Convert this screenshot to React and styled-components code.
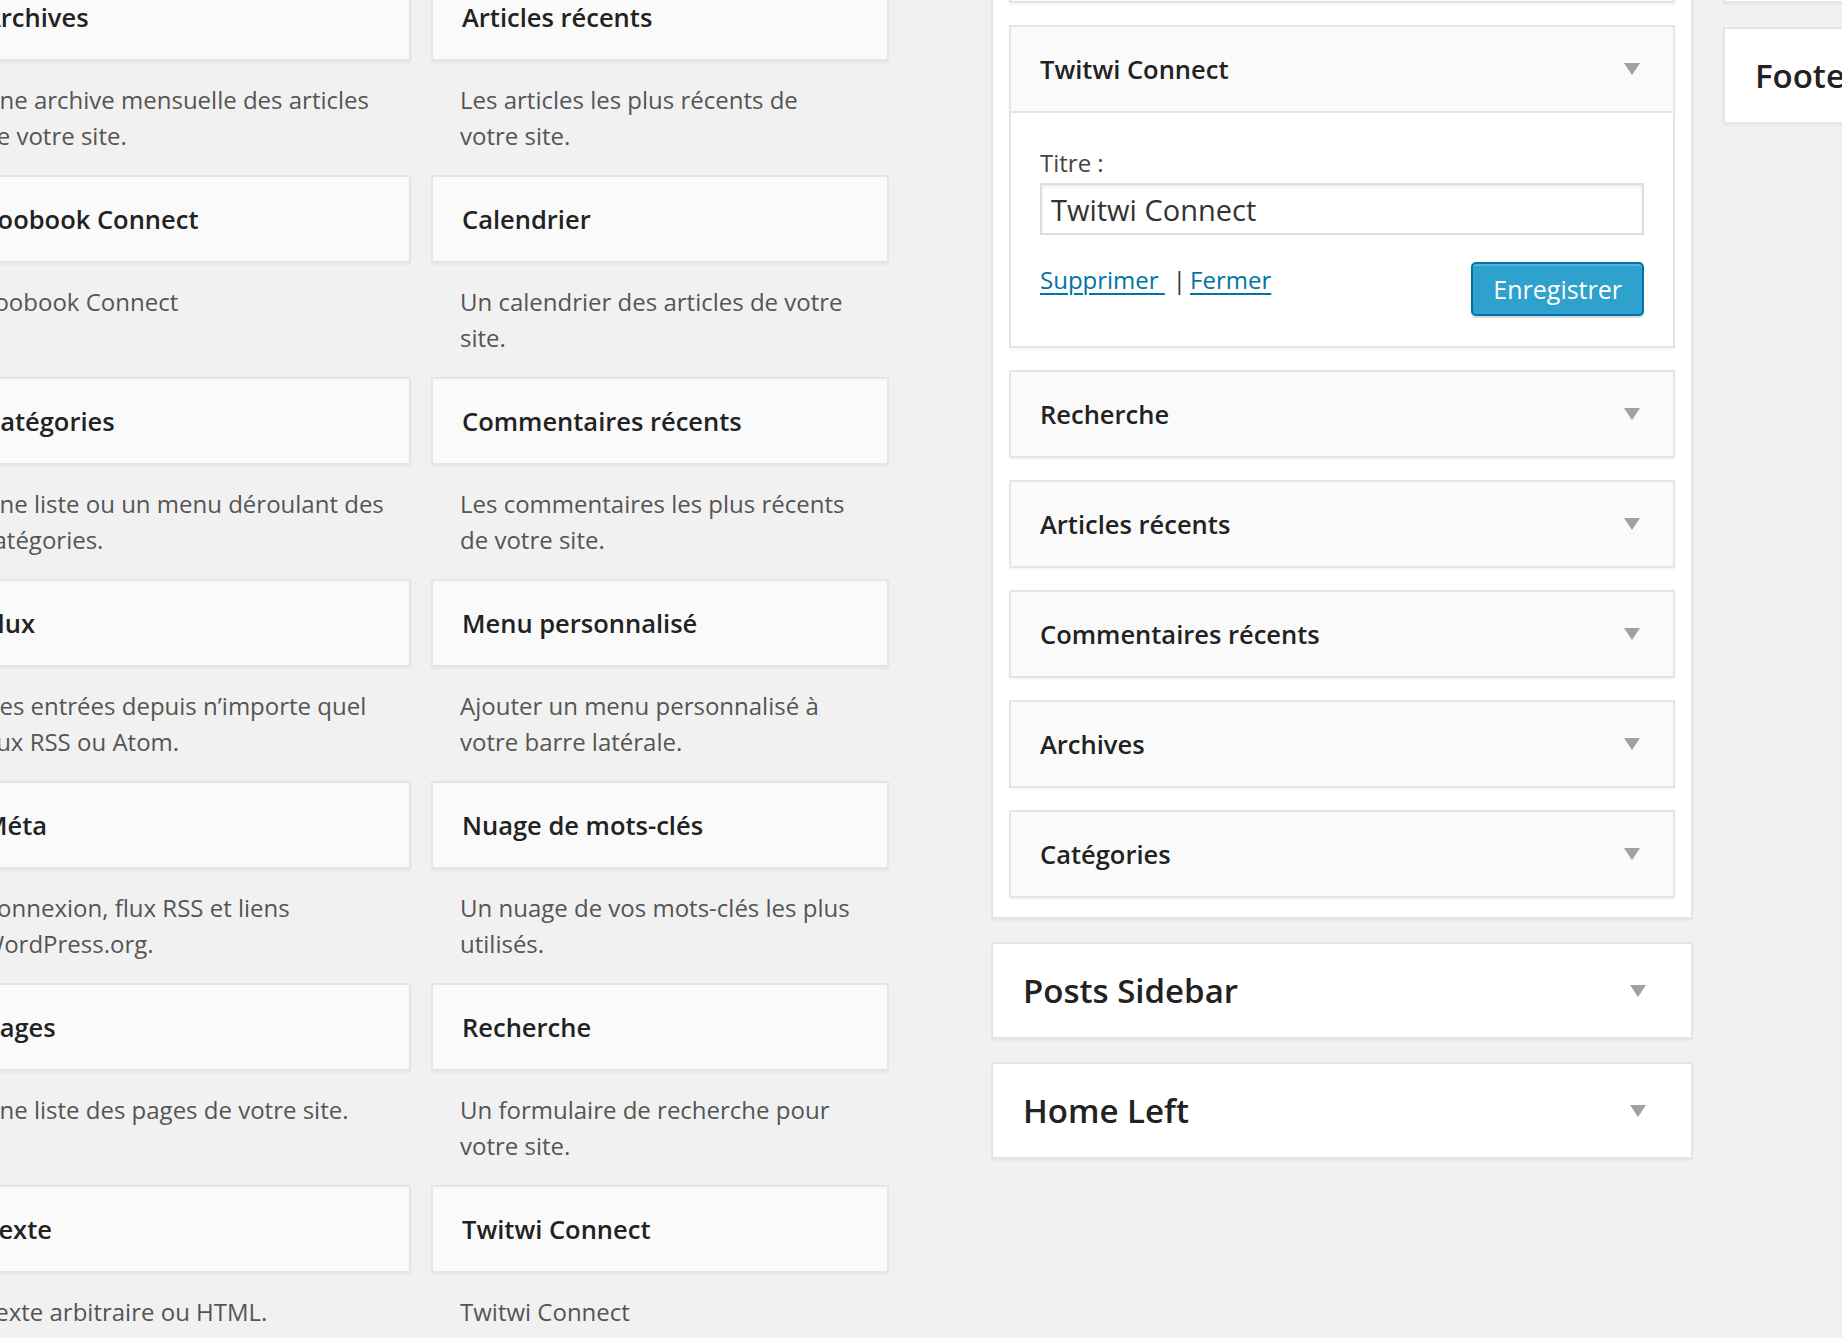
import React from "react";
import styled, { createGlobalStyle } from "styled-components";

const GlobalStyle = createGlobalStyle`
  html, body {
    margin: 0;
    padding: 0;
    background: #f1f1f1;
    overflow: hidden;
  }
  body {
    font-family: "Open Sans", "Liberation Sans", sans-serif;
    color: #444;
    -webkit-font-smoothing: antialiased;
  }
  * { box-sizing: border-box; }
`;

const Page = styled.div`
  display: flex;
  align-items: flex-start;
  margin: -107px 0 0 -47px;
  width: 2600px;
`;

const AvailableGrid = styled.div`
  flex: none;
  display: grid;
  grid-template-columns: 458px 458px;
  column-gap: 20px;
  padding-top: 80px;
`;

const WidgetItem = styled.div`
  display: flex;
  flex-direction: column;
`;

const WidgetBox = styled.div`
  height: 88px;
  display: flex;
  align-items: center;
  padding: 0 20px 0 29px;
  background: #fafafa;
  border: 2px solid #e5e5e5;
  box-shadow: 0 2px 2px rgba(0, 0, 0, 0.04);
  font-size: 25.5px;
  font-weight: 600;
  color: #222;
  white-space: nowrap;
  overflow: hidden;
`;

const Description = styled.p`
  margin: 0;
  box-sizing: content-box;
  width: 405px;
  min-height: 72px;
  padding: 21px 24px 21px 29px;
  font-size: 24px;
  line-height: 36px;
  color: #555;
  white-space: pre-line;
`;

const SidebarsColumn = styled.div`
  flex: none;
  width: 702px;
  margin-left: 102px;
  display: flex;
  flex-direction: column;
  gap: 23px;
`;

const Panel = styled.div`
  background: #fff;
  border: 2px solid #e5e5e5;
  box-shadow: 0 2px 2px rgba(0, 0, 0, 0.04);
  padding: 20px 16px 19px;
  display: flex;
  flex-direction: column;
  gap: 22px;
`;

const SidebarWidget = styled.div`
  background: #fafafa;
  border: 2px solid #e5e5e5;
  box-shadow: 0 2px 2px rgba(0, 0, 0, 0.04);
`;

const WidgetHead = styled.div`
  height: ${(p) => (p.$open ? 86 : 84)}px;
  display: flex;
  align-items: center;
  justify-content: space-between;
  padding: 0 33px 0 29px;
  border-bottom: ${(p) => (p.$open ? "2px solid #e5e5e5" : "none")};
  font-size: 25.5px;
  font-weight: 600;
  color: #222;
`;

const Arrow = styled.span`
  flex: none;
  width: 0;
  height: 0;
  border-left: 8px solid transparent;
  border-right: 8px solid transparent;
  border-top: 12px solid #a0a0a0;
`;

const WidgetInside = styled.div`
  background: #fff;
  padding: 32px 29px 30px;
`;

const Label = styled.label`
  display: block;
  font-size: 24px;
  line-height: 36px;
  color: #444;
  margin-bottom: 2px;
`;

const TextInput = styled.input`
  display: block;
  width: 100%;
  height: 52px;
  margin: 0;
  padding: 0 9px;
  border: 2px solid #ddd;
  box-shadow: inset 0 2px 3px rgba(0, 0, 0, 0.07);
  background: #fff;
  font-family: "Open Sans", "Liberation Sans", sans-serif;
  font-size: 29px;
  color: #333;
  outline: none;
`;

const Actions = styled.div`
  display: flex;
  justify-content: space-between;
  align-items: flex-start;
  margin-top: 27px;
`;

const Links = styled.div`
  font-size: 24px;
  line-height: 36px;
  color: #333;
`;

const Separator = styled.span`
  margin: 0 4px 0 8px;
`;

const Link = styled.a`
  color: #0074a2;
  text-decoration: underline;
  text-underline-offset: 4px;
  text-decoration-thickness: 2px;
`;

const SaveButton = styled.button`
  height: 54px;
  padding: 0 20px;
  border: 2px solid #0074a2;
  border-radius: 5px;
  background: #2ea2cc;
  color: #fff;
  font-family: "Open Sans", "Liberation Sans", sans-serif;
  font-size: 25px;
  line-height: 1;
  box-shadow: inset 0 2px 0 rgba(120, 200, 230, 0.5), 0 2px 0 rgba(0, 0, 0, 0.15);
  cursor: pointer;
`;

const SidebarBox = styled.div`
  height: 97px;
  display: flex;
  align-items: center;
  justify-content: space-between;
  padding: 0 45px 0 30px;
  background: #fff;
  border: 2px solid #e5e5e5;
  box-shadow: 0 2px 2px rgba(0, 0, 0, 0.04);
  font-size: 33px;
  font-weight: 600;
  color: #222;
  white-space: nowrap;
`;

const FarColumn = styled.div`
  flex: none;
  width: 702px;
  margin-left: 30px;
  margin-top: 13px;
  display: flex;
  flex-direction: column;
  gap: 24px;
`;

const available = [
  ["Archives", "Une archive mensuelle des articles de votre site."],
  ["Articles récents", "Les articles les plus récents de\nvotre site."],
  ["Foobook Connect", "Foobook Connect"],
  ["Calendrier", "Un calendrier des articles de votre site."],
  ["Catégories", "Une liste ou un menu déroulant des catégories."],
  ["Commentaires récents", "Les commentaires les plus récents de votre site."],
  ["Flux", "Des entrées depuis n’importe quel flux RSS ou Atom."],
  ["Menu personnalisé", "Ajouter un menu personnalisé à votre barre latérale."],
  ["Méta", "Connexion, flux RSS et liens WordPress.org."],
  ["Nuage de mots-clés", "Un nuage de vos mots-clés les plus utilisés."],
  ["Pages", "Une liste des pages de votre site."],
  ["Recherche", "Un formulaire de recherche pour votre site."],
  ["Texte", "Texte arbitraire ou HTML."],
  ["Twitwi Connect", "Twitwi Connect"],
];

const closedWidgets = ["Recherche", "Articles récents", "Commentaires récents", "Archives", "Catégories"];

function ClosedWidget({ title }) {
  return (
    <SidebarWidget>
      <WidgetHead>
        <span>{title}</span>
        <Arrow />
      </WidgetHead>
    </SidebarWidget>
  );
}

export default function App() {
  return (
    <>
      <GlobalStyle />
      <Page>
        <AvailableGrid>
          {available.map(([title, desc]) => (
            <WidgetItem key={title + desc}>
              <WidgetBox>{title}</WidgetBox>
              <Description>{desc}</Description>
            </WidgetItem>
          ))}
        </AvailableGrid>

        <SidebarsColumn>
          <Panel>
            <ClosedWidget title="Texte" />
            <SidebarWidget>
              <WidgetHead $open>
                <span>Twitwi Connect</span>
                <Arrow />
              </WidgetHead>
              <WidgetInside>
                <Label htmlFor="twitwi-title">Titre :</Label>
                <TextInput id="twitwi-title" defaultValue="Twitwi Connect" />
                <Actions>
                  <Links>
                    <Link href="#">Supprimer </Link>
                    <Separator>|</Separator>
                    <Link href="#">Fermer</Link>
                  </Links>
                  <SaveButton>Enregistrer</SaveButton>
                </Actions>
              </WidgetInside>
            </SidebarWidget>
            {closedWidgets.map((t) => (
              <ClosedWidget key={t} title={t} />
            ))}
          </Panel>
          <SidebarBox>
            <span>Posts Sidebar</span>
            <Arrow />
          </SidebarBox>
          <SidebarBox>
            <span>Home Left</span>
            <Arrow />
          </SidebarBox>
        </SidebarsColumn>

        <FarColumn>
          <SidebarBox>
            <span>Home Right</span>
            <Arrow />
          </SidebarBox>
          <SidebarBox>
            <span>Footer</span>
            <Arrow />
          </SidebarBox>
        </FarColumn>
      </Page>
    </>
  );
}
